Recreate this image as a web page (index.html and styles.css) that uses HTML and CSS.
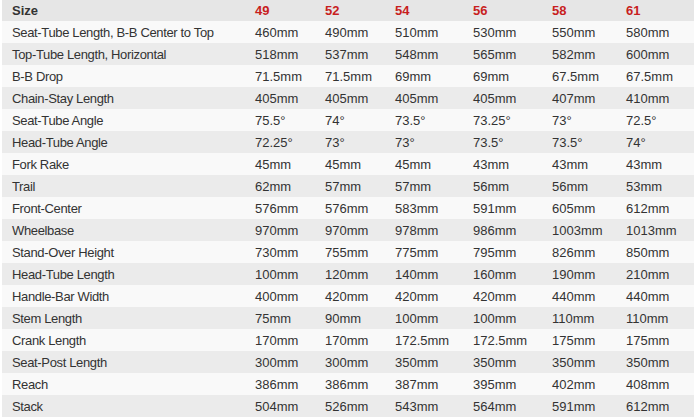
FILE: index.html
```html
<!DOCTYPE html>
<html>
<head>
<meta charset="utf-8">
<link rel="stylesheet" href="styles.css">
</head>
<body>
<div class="table">
  <div class="row head"><div class="c">Size</div><div class="c">49</div><div class="c">52</div><div class="c">54</div><div class="c">56</div><div class="c">58</div><div class="c">61</div></div>
  <div class="row odd"><div class="c">Seat-Tube Length, B-B Center to Top</div><div class="c">460mm</div><div class="c">490mm</div><div class="c">510mm</div><div class="c">530mm</div><div class="c">550mm</div><div class="c">580mm</div></div>
  <div class="row even"><div class="c">Top-Tube Length, Horizontal</div><div class="c">518mm</div><div class="c">537mm</div><div class="c">548mm</div><div class="c">565mm</div><div class="c">582mm</div><div class="c">600mm</div></div>
  <div class="row odd"><div class="c">B-B Drop</div><div class="c">71.5mm</div><div class="c">71.5mm</div><div class="c">69mm</div><div class="c">69mm</div><div class="c">67.5mm</div><div class="c">67.5mm</div></div>
  <div class="row even"><div class="c">Chain-Stay Length</div><div class="c">405mm</div><div class="c">405mm</div><div class="c">405mm</div><div class="c">405mm</div><div class="c">407mm</div><div class="c">410mm</div></div>
  <div class="row odd"><div class="c">Seat-Tube Angle</div><div class="c">75.5°</div><div class="c">74°</div><div class="c">73.5°</div><div class="c">73.25°</div><div class="c">73°</div><div class="c">72.5°</div></div>
  <div class="row even"><div class="c">Head-Tube Angle</div><div class="c">72.25°</div><div class="c">73°</div><div class="c">73°</div><div class="c">73.5°</div><div class="c">73.5°</div><div class="c">74°</div></div>
  <div class="row odd"><div class="c">Fork Rake</div><div class="c">45mm</div><div class="c">45mm</div><div class="c">45mm</div><div class="c">43mm</div><div class="c">43mm</div><div class="c">43mm</div></div>
  <div class="row even"><div class="c">Trail</div><div class="c">62mm</div><div class="c">57mm</div><div class="c">57mm</div><div class="c">56mm</div><div class="c">56mm</div><div class="c">53mm</div></div>
  <div class="row odd"><div class="c">Front-Center</div><div class="c">576mm</div><div class="c">576mm</div><div class="c">583mm</div><div class="c">591mm</div><div class="c">605mm</div><div class="c">612mm</div></div>
  <div class="row even"><div class="c">Wheelbase</div><div class="c">970mm</div><div class="c">970mm</div><div class="c">978mm</div><div class="c">986mm</div><div class="c">1003mm</div><div class="c">1013mm</div></div>
  <div class="row odd"><div class="c">Stand-Over Height</div><div class="c">730mm</div><div class="c">755mm</div><div class="c">775mm</div><div class="c">795mm</div><div class="c">826mm</div><div class="c">850mm</div></div>
  <div class="row even"><div class="c">Head-Tube Length</div><div class="c">100mm</div><div class="c">120mm</div><div class="c">140mm</div><div class="c">160mm</div><div class="c">190mm</div><div class="c">210mm</div></div>
  <div class="row odd"><div class="c">Handle-Bar Width</div><div class="c">400mm</div><div class="c">420mm</div><div class="c">420mm</div><div class="c">420mm</div><div class="c">440mm</div><div class="c">440mm</div></div>
  <div class="row even"><div class="c">Stem Length</div><div class="c">75mm</div><div class="c">90mm</div><div class="c">100mm</div><div class="c">100mm</div><div class="c">110mm</div><div class="c">110mm</div></div>
  <div class="row odd"><div class="c">Crank Length</div><div class="c">170mm</div><div class="c">170mm</div><div class="c">172.5mm</div><div class="c">172.5mm</div><div class="c">175mm</div><div class="c">175mm</div></div>
  <div class="row even"><div class="c">Seat-Post Length</div><div class="c">300mm</div><div class="c">300mm</div><div class="c">350mm</div><div class="c">350mm</div><div class="c">350mm</div><div class="c">350mm</div></div>
  <div class="row odd"><div class="c">Reach</div><div class="c">386mm</div><div class="c">386mm</div><div class="c">387mm</div><div class="c">395mm</div><div class="c">402mm</div><div class="c">408mm</div></div>
  <div class="row even"><div class="c">Stack</div><div class="c">504mm</div><div class="c">526mm</div><div class="c">543mm</div><div class="c">564mm</div><div class="c">591mm</div><div class="c">612mm</div></div>
</div>
</body>
</html>
```
FILE: styles.css
```css
html, body {
  margin: 0;
  padding: 0;
  background: #ffffff;
}
body {
  font-family: "Liberation Sans", Arial, Helvetica, sans-serif;
  font-size: 13px;
  color: #333333;
  overflow: hidden;
}
.table {
  width: 694px;
  padding-left: 2px;
  box-sizing: border-box;
}
.row {
  display: grid;
  grid-template-columns: 243px 70px 70px 78px 79px 74px 1fr;
  height: 22px;
  align-items: center;
}
.row .c {
  padding-left: 10px;
  white-space: nowrap;
}
.row .c:first-child {
  letter-spacing: -0.35px;
}
.head {
  height: 21px;
  background: #e6e6e6;
  font-weight: bold;
  color: #c81e1e;
}
.head .c:first-child {
  color: #333333;
  letter-spacing: 0;
}
.odd {
  background: #f9f9f9;
}
.even {
  background: #ebebeb;
}
```
